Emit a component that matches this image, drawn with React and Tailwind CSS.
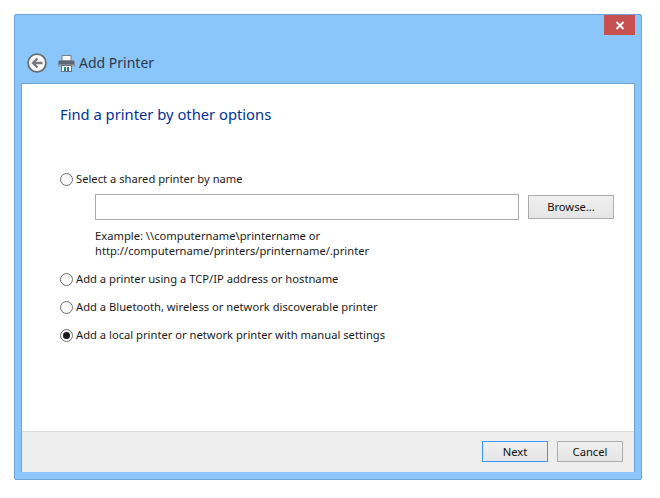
const Radio = ({ checked }) => (
  <span className="w-[13px] h-[13px] rounded-full border border-[#707070] bg-gradient-to-b from-[#f4f4f4] to-white flex items-center justify-center shrink-0">
    {checked && <span className="w-[7px] h-[7px] rounded-full bg-[#1a1a1a]" />}
  </span>
);

const Option = ({ label, checked, className }) => (
  <label className={`flex items-center gap-[3px] h-[16px] ${className}`}>
    <Radio checked={checked} />
    <span>{label}</span>
  </label>
);

const Button = ({ children, className }) => (
  <button className={`bg-gradient-to-b from-[#f0f0f0] to-[#e5e5e5] border text-[#111] text-center ${className}`}>
    {children}
  </button>
);

const BackIcon = () => (
  <svg width="20" height="20" viewBox="0 0 20 20">
    <circle cx="10" cy="10" r="8.9" fill="#fafafa" stroke="#6a6e74" strokeWidth="1.8" />
    <path d="M15.5 10H6.5M10.5 5.5L6 10l4.5 4.5" fill="none" stroke="#777b80" strokeWidth="2.4" />
  </svg>
);

const PrinterIcon = () => (
  <svg width="17" height="17" viewBox="0 0 17 17">
    <rect x="4" y="0.5" width="9" height="5.5" fill="#f8f8f8" stroke="#7a8088" />
    <rect x="0.5" y="5.5" width="16" height="6.5" rx="1" fill="#5f6670" />
    <rect x="1" y="9.5" width="15" height="2.5" fill="#a3a8ae" />
    <rect x="3.5" y="10.5" width="10" height="6" fill="#ffffff" stroke="#6e7580" />
    <rect x="6" y="12" width="2" height="4" fill="#1f8a70" />
    <rect x="9" y="12" width="2" height="4" fill="#2f6fb0" />
  </svg>
);

const CloseIcon = () => (
  <svg width="10" height="9" viewBox="0 0 10 9">
    <path d="M1.5 1l7 7M8.5 1l-7 7" stroke="#fff" strokeWidth="1.8" fill="none" />
  </svg>
);

export default function App() {
  return (
    <div className="w-[660px] h-[498px] bg-white pt-[14px] pl-[14px] font-['Noto_Sans',sans-serif] text-[11.2px] leading-[16px] text-[#1a1a1a]">
      <div className="w-[628px] h-[466px] bg-[#8bc6fa] border border-[#6fa3d3] rounded-[2px] flex flex-col">
        {/* Title bar */}
        <div className="h-[20px] flex justify-end pr-[6px]">
          <div className="w-[31px] h-[20px] bg-[#c75050] flex items-center justify-center">
            <CloseIcon />
          </div>
        </div>

        {/* Nav */}
        <div className="h-[48px] flex items-center pl-[12px] pt-[8px]">
          <BackIcon />
          <span className="ml-[11px] flex"><PrinterIcon /></span>
          <span className="ml-[4px] text-[14px] text-[#2b3a4a]">Add Printer</span>
        </div>

        {/* Content */}
        <div className="mx-[6px] flex-1 bg-white border border-[#6fa3d3] border-b-0 flex flex-col">
          <div className="flex-1 pl-[38px]">
            <h1 className="mt-[20px] h-[20px] text-[14.75px] leading-[20px] text-[#003399]">Find a printer by other options</h1>

            <Option label="Select a shared printer by name" className="mt-[47px]" />
            <div className="mt-[7px] ml-[35px] flex items-center">
              <div className="w-[424px] h-[26px] bg-white border border-[#ababab]" />
              <Button className="ml-[9px] w-[86px] h-[24px] border-[#acacac]">Browse...</Button>
            </div>
            <p className="mt-[8px] ml-[35px] leading-[15px]">
              Example: \\computername\printername or<br />
              http://computername/printers/printername/.printer
            </p>

            <Option label="Add a printer using a TCP/IP address or hostname" className="mt-[13px]" />
            <Option label="Add a Bluetooth, wireless or network discoverable printer" className="mt-[12px]" />
            <Option label="Add a local printer or network printer with manual settings" checked className="mt-[12px]" />
          </div>

          {/* Footer */}
          <div className="h-[41px] bg-[#eeeeee] border-t border-[#dcdcdc] flex justify-end items-start pt-[9px] pr-[11px] gap-[9px]">
            <Button className="w-[66px] h-[21px] border-[#3399ff] leading-[18px]">Next</Button>
            <Button className="w-[66px] h-[21px] border-[#acacac] leading-[18px]">Cancel</Button>
          </div>
        </div>
        <div className="h-[7px]" />
      </div>
    </div>
  );
}
